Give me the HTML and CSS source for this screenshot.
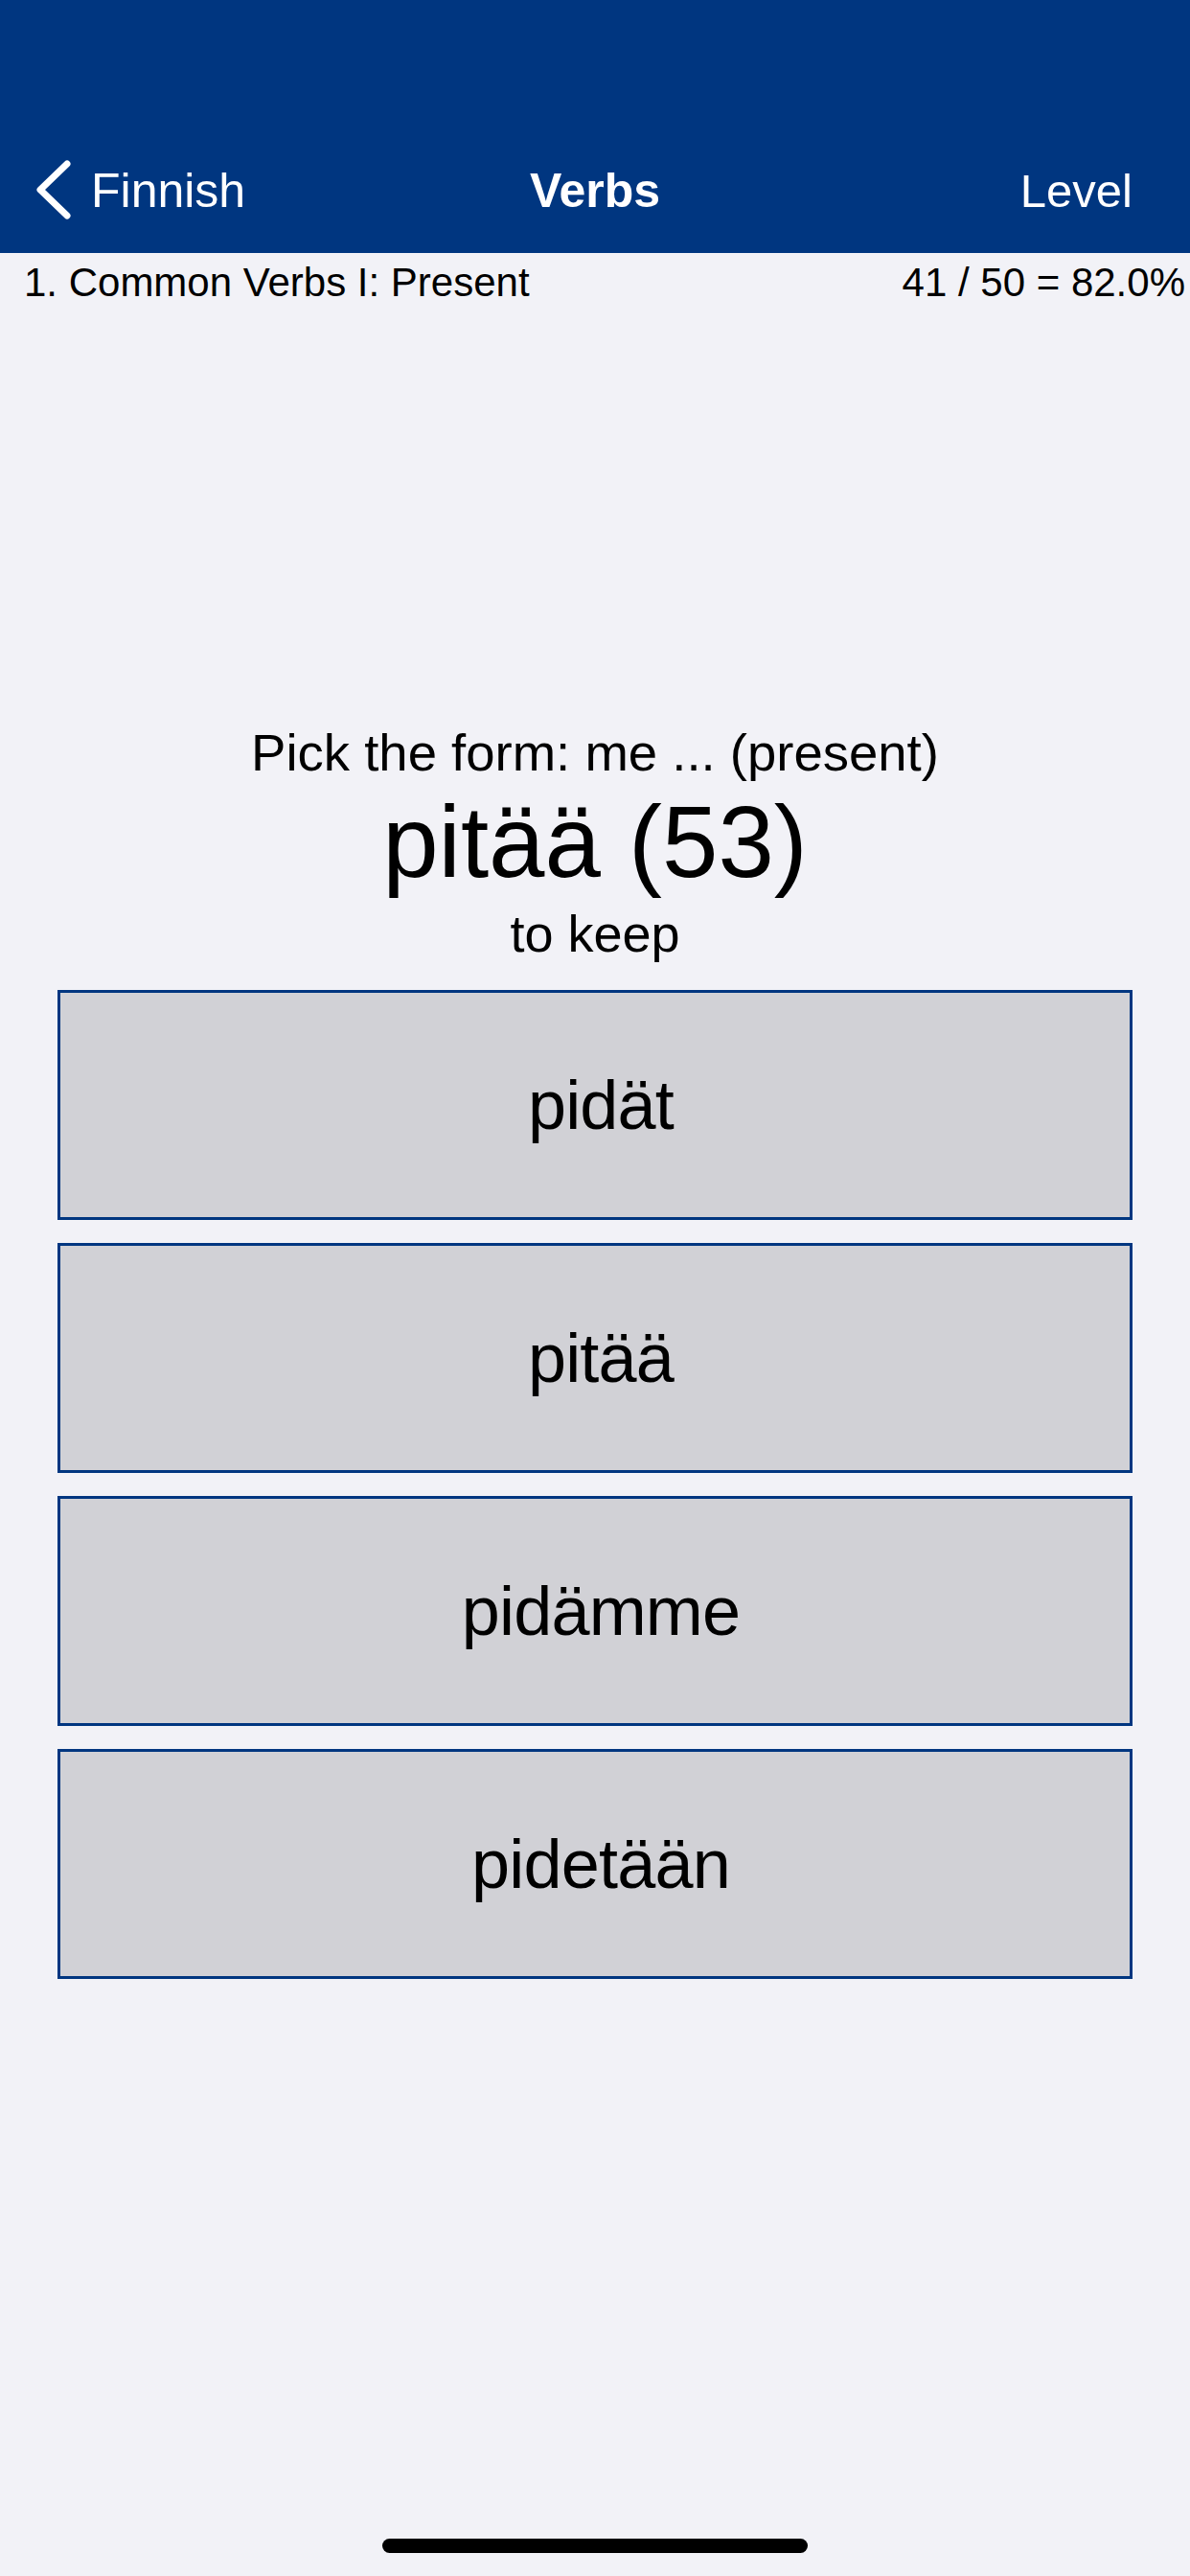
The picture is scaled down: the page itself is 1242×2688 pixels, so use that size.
FILE: index.html
```html
<!DOCTYPE html>
<html lang="en">
<head>
<meta charset="utf-8">
<title>Verbs</title>
<link rel="stylesheet" href="styles.css">
</head>
<body>
<div class="screen">
  <header class="header">
    <div class="status-bar"></div>
    <nav class="nav-bar">
      <div class="nav-left">
        <svg class="chevron" width="38" height="64" viewBox="0 0 38 64" aria-hidden="true">
          <polyline points="33,5 5,32 33,59" fill="none" stroke="#ffffff" stroke-width="7" stroke-linecap="round" stroke-linejoin="round"/>
        </svg>
        <span class="nav-back">Finnish</span>
      </div>
      <div class="nav-title">Verbs</div>
      <div class="nav-right">Level</div>
    </nav>
  </header>

  <div class="info-row">
    <span class="info-left">1. Common Verbs I: Present</span>
    <span class="info-right">41 / 50 = 82.0%</span>
  </div>

  <section class="question">
    <div class="prompt">Pick the form: me ... (present)</div>
    <div class="word">pitää (53)</div>
    <div class="meaning">to keep</div>
  </section>

  <div class="answers">
    <div class="answer">pidät</div>
    <div class="answer">pitää</div>
    <div class="answer">pidämme</div>
    <div class="answer">pidetään</div>
  </div>

  <div class="home-indicator"></div>
</div>
</body>
</html>
```

FILE: styles.css
```css
html, body {
  margin: 0;
  padding: 0;
}

body {
  background: #f2f2f7;
  font-family: "Liberation Sans", Arial, sans-serif;
  color: #000000;
}

.screen {
  width: 1242px;
  height: 2688px;
  display: flex;
  flex-direction: column;
  background: #f2f2f7;
  overflow: hidden;
}

.header {
  background: #003680;
  color: #ffffff;
}

.status-bar {
  height: 132px;
}

.nav-bar {
  height: 132px;
  display: grid;
  grid-template-columns: 1fr auto 1fr;
  align-items: center;
}

.nav-left {
  display: flex;
  align-items: center;
  gap: 20px;
  padding-left: 37px;
}

.chevron {
  display: block;
}

.nav-back {
  font-size: 50px;
  line-height: 60px;
  padding-top: 1px;
}

.nav-title {
  font-size: 50px;
  font-weight: bold;
  line-height: 60px;
  padding-top: 1px;
}

.nav-right {
  justify-self: end;
  padding-right: 60px;
  font-size: 49px;
  line-height: 60px;
  padding-top: 1px;
}

.info-row {
  display: flex;
  justify-content: space-between;
  padding: 6px 5px 0 25px;
  font-size: 42px;
  line-height: 50px;
}

.question {
  margin-top: 433px;
  text-align: center;
}

.prompt {
  font-size: 54.5px;
  line-height: 66px;
}

.word {
  font-size: 105px;
  line-height: 120px;
}

.meaning {
  font-size: 54px;
  line-height: 70px;
}

.answers {
  margin-top: 24px;
  padding: 0 60px;
  display: flex;
  flex-direction: column;
  gap: 24px;
}

.answer {
  height: 240px;
  box-sizing: border-box;
  border: 3px solid #003680;
  background: #d1d1d6;
  display: flex;
  align-items: center;
  justify-content: center;
  padding-left: 12px;
  font-size: 72px;
  letter-spacing: -0.8px;
}

.home-indicator {
  margin: auto auto 24px;
  width: 444px;
  height: 15px;
  border-radius: 8px;
  background: #000000;
}
```
